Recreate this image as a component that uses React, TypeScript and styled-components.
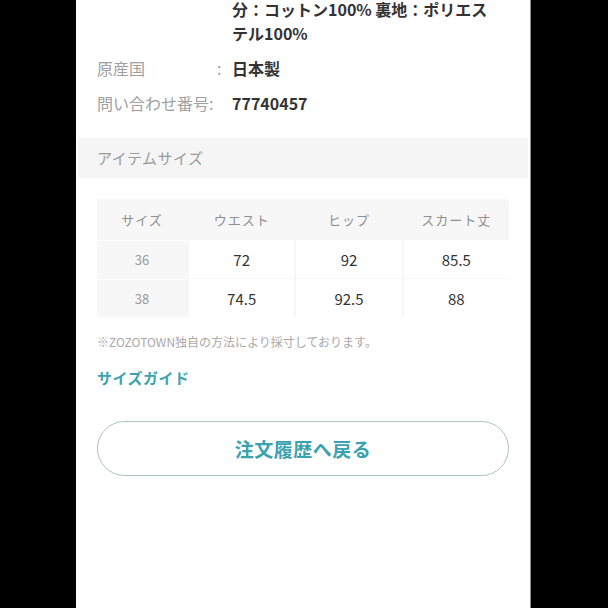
import React from "react";
import styled, { createGlobalStyle } from "styled-components";

const Global = createGlobalStyle`
  html, body { margin: 0; padding: 0; background: #000; }
  body { font-family: "Noto Sans CJK JP", "Noto Sans", sans-serif; }
`;

const Frame = styled.div`
  width: 608px;
  height: 608px;
  overflow: hidden;
  background: #000;
  display: flex;
`;

const Panel = styled.main`
  margin-left: 76px;
  width: 455px;
  height: 608px;
  background: #fff;
  border-right: 1px solid #8a8a8a;
  box-sizing: border-box;
  display: flex;
  flex-direction: column;
  overflow: hidden;
`;

const Specs = styled.dl`
  margin: -3px 0 0;
  padding: 0 21px;
  display: flex;
  flex-direction: column;
  gap: 11px;
`;

const SpecRow = styled.div`
  display: grid;
  grid-template-columns: 120px 15px 1fr;
  font-size: 16px;
  line-height: 24px;
`;

const Label = styled.dt`
  margin: 0;
  color: #a0a0a0;
  white-space: nowrap;
`;

const Colon = styled.span`
  color: #a0a0a0;
`;

const Value = styled.dd`
  margin: 0;
  color: #333;
  font-weight: 700;
`;

const SectionHeader = styled.h2`
  margin: 23px 2px 0;
  height: 40px;
  padding-left: 19px;
  background: #f5f5f5;
  color: #9a9a9a;
  font-size: 15px;
  font-weight: 400;
  line-height: 40px;
  letter-spacing: 0.5px;
`;

const Body = styled.section`
  padding: 0 21px;
  display: flex;
  flex-direction: column;
`;

const Table = styled.div`
  margin-top: 21px;
  display: grid;
  grid-template-columns: 90px 1fr 1fr 1fr;
  grid-template-rows: 40px 38px 38px;
  gap: 1px 2px;
  background: #f7f7f7;
  border-radius: 3px;
  overflow: hidden;
`;

const HeadCell = styled.div`
  background: #f7f7f7;
  color: #8f8f8f;
  font-size: 13px;
  display: flex;
  align-items: center;
  justify-content: center;
  letter-spacing: 1px;
`;

const SizeCell = styled.div`
  background: #f7f7f7;
  color: #9a9a9a;
  font-size: 13px;
  display: flex;
  align-items: center;
  justify-content: center;
  border-top: 1px solid #fdfdfd;
`;

const DataCell = styled.div`
  background: #fff;
  color: #333;
  font-size: 15px;
  display: flex;
  align-items: center;
  justify-content: center;
`;

const Note = styled.p`
  margin: 16px 0 0;
  font-size: 12px;
  line-height: 18px;
  color: #a8a8a8;
`;

const GuideLink = styled.a`
  margin-top: 17px;
  font-size: 15px;
  line-height: 20px;
  font-weight: 700;
  color: #3aa3b0;
  text-decoration: none;
  letter-spacing: 0.5px;
`;

const BackButton = styled.button`
  margin-top: 33px;
  height: 55px;
  border: 1px solid #a9c3c6;
  border-radius: 28px;
  background: #fff;
  color: #3aa3b0;
  font-family: inherit;
  font-size: 19px;
  font-weight: 700;
  letter-spacing: 0.5px;
  cursor: pointer;
`;

const headers = ["サイズ", "ウエスト", "ヒップ", "スカート丈"];
const rows = [
  ["36", "72", "92", "85.5"],
  ["38", "74.5", "92.5", "88"],
];

export default function App() {
  return (
    <>
      <Global />
      <Frame>
        <Panel>
          <Specs>
            <SpecRow>
              <Label />
              <Colon />
              <Value>
                分：コットン100% 裏地：ポリエス
                <br />
                テル100%
              </Value>
            </SpecRow>
            <SpecRow>
              <Label>原産国</Label>
              <Colon>:</Colon>
              <Value>日本製</Value>
            </SpecRow>
            <SpecRow>
              <Label>問い合わせ番号:</Label>
              <Colon />
              <Value>77740457</Value>
            </SpecRow>
          </Specs>
          <SectionHeader>アイテムサイズ</SectionHeader>
          <Body>
            <Table>
              {headers.map((h) => (
                <HeadCell key={h}>{h}</HeadCell>
              ))}
              {rows.map((r) =>
                r.map((v, i) =>
                  i === 0 ? (
                    <SizeCell key={r[0] + i}>{v}</SizeCell>
                  ) : (
                    <DataCell key={r[0] + i}>{v}</DataCell>
                  )
                )
              )}
            </Table>
            <Note>※ZOZOTOWN独自の方法により採寸しております。</Note>
            <GuideLink href="#">サイズガイド</GuideLink>
            <BackButton>注文履歴へ戻る</BackButton>
          </Body>
        </Panel>
      </Frame>
    </>
  );
}
